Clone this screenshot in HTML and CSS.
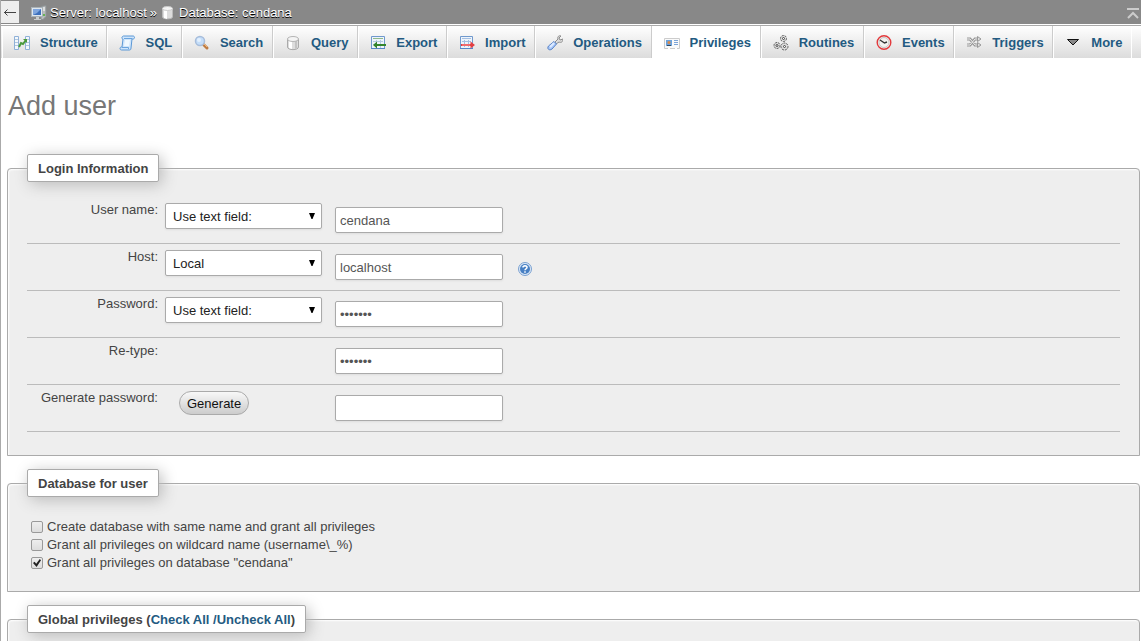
FILE: index.html
```html
<!DOCTYPE html>
<html lang="en">
<head>
<meta charset="utf-8">
<title>Add user</title>
<link rel="stylesheet" href="styles.css">
</head>
<body>
<div class="page">
  <header class="server-bar">
    <button class="nav-toggle" type="button" aria-label="Hide navigation panel">
      <svg width="14" height="10" viewBox="0 0 14 10" fill="none" stroke="#444"><path d="M1 5.500h12M4.500 2.500L1.500 5.500l3 3"/></svg>
    </button>
    <nav class="breadcrumb">
      <svg class="icon" viewBox="0 0 16 16"><path d="M10 1.500l5-1v11l-3 3h-2z" fill="#b9bcbd" stroke="#8c9294"/><path d="M11 3h3M11 5h3" stroke="#fff"/><rect x=".5" y="2.500" width="11" height="9" fill="#dfe7ee" stroke="#a9b2b8"/><rect x="2" y="4" width="8" height="6" fill="#3d70bd"/><path d="M2 4h8l-4 4-4 2z" fill="#7fa6de"/><path d="M5 12h3v2h2v1H3v-1h2z" fill="#c8cbcc"/><circle cx="13" cy="10" r="1" fill="#4caf35"/></svg>
      <a href="#server">Server: localhost</a>
      <span>»</span>
      <svg class="icon" viewBox="0 0 16 16"><path d="M2.500 4v8c0 2.500 10 2.500 10 0V4z" fill="#ddd" stroke="#bbb"/><path d="M4 5h3v9l-3-1z" fill="#fff"/><ellipse cx="7.500" cy="3.500" rx="5" ry="2" fill="#f5f5f5" stroke="#ccc"/></svg>
      <a href="#database">Database: cendana</a>
    </nav>
    <button class="collapse" type="button" aria-label="Scroll to top">
      <svg width="12" height="11" viewBox="0 0 12 11" fill="none" stroke="#ccc" stroke-width="2"><path d="M0 1h12M1 10l5-5 5 5"/></svg>
    </button>
  </header>

  <nav class="tabs">
    <a class="tab" href="#structure"><svg class="icon" viewBox="0 0 16 16"><path d="M.5 1.500h4v13h-4zM11.500 1.500h4v13h-4z" fill="#f4f8fc" stroke="#8fb1d8"/><path d="M1 4.500h3M1 7.500h3M1 10.500h3M12 4.500h3M12 7.500h3M12 10.500h3" stroke="#b0c7df"/><path d="M5 12l2-4 2 1 3-4" fill="none" stroke="#4a9a3c" stroke-width="2"/><path d="M9 4h4v4z" fill="#4a9a3c"/></svg>Structure</a>
    <a class="tab" href="#sql"><svg class="icon" viewBox="0 0 16 16"><path d="M4.500 1h9.500c2 0 2 3 0 3h-1l-1 9c0 2-1 2-2 2H2.500c-2 0-2-3 0-3H3l1-8c-2 0-1-3 .5-3z" fill="#cfe5fb" stroke="#5b98d6"/><path d="M5 3.500h8M3 12.500h6.500V14" fill="none" stroke="#6ba4dd"/><path d="M6 5h5l-1 6H5z" fill="#eff8ff"/></svg>SQL</a>
    <a class="tab" href="#search"><svg class="icon" viewBox="0 0 16 16"><path d="M9.500 9.500l3.500 3.500" stroke="#bd7b43" stroke-width="3" stroke-linecap="round"/><path d="M10 9l3 3" stroke="#f0b77a"/><circle cx="6" cy="6" r="4.500" fill="#c4defa" stroke="#a7bddb" stroke-width="1.500"/><circle cx="5" cy="5" r="2" fill="#e3f0fd"/></svg>Search</a>
    <a class="tab" href="#query"><svg class="icon" viewBox="0 0 16 16"><path d="M2.500 4v8c0 3.500 11 3.500 11 0V4z" fill="#ddd" stroke="#aaa"/><path d="M4 5h3v9l-3-1z" fill="#fff"/><path d="M10 5h2v8l-2 1z" fill="#c3c3c3"/><ellipse cx="8" cy="4" rx="5.500" ry="2.500" fill="#f4f4f4" stroke="#b5b5b5"/></svg>Query</a>
    <a class="tab" href="#export"><svg class="icon" viewBox="0 0 16 16"><path d="M1.500 1.500h13v12h-13z" fill="#eef4fb" stroke="#7099cd"/><path d="M3 3.500h10" stroke="#8fb98b"/><path d="M3 6.500h10M3 9.500h10M6.500 5v8M10.500 5v8" stroke="#b5cae4"/><path d="M1 13.500h14" stroke="#5585c6"/><path d="M3 10l4-3.500V9h9v2H7v2.500z" fill="#35852d"/></svg>Export</a>
    <a class="tab" href="#import"><svg class="icon" viewBox="0 0 16 16"><path d="M1.500 1.500h12v12h-12z" fill="#eef4fb" stroke="#7099cd"/><path d="M3 3.500h9M3 6.500h9M5.500 5v7M9.500 5v7" stroke="#a4bfe2"/><path d="M1 13.500h13" stroke="#5585c6"/><path d="M2 9h9.500V6.500L16 10l-4.500 3.500V11H2z" fill="#e43d40"/><path d="M3 10h8" stroke="#ff9c9c"/></svg>Import</a>
    <a class="tab" href="#operations"><svg class="icon" viewBox="0 0 16 16"><path d="M8 7l3-3c-1-2 1-4 3-3l-2 2 1 2 3-1c0 3-2 4-4 3L9 9z" fill="#ddd" stroke="#8d8d8d"/><path d="M7 6.500L1.500 11c-2 3 1 5 3.500 3l4.500-5z" fill="#a9c8fa" stroke="#5681c5"/><path d="M3 12l4-4" stroke="#dceaff" stroke-width="2"/></svg>Operations</a>
    <a class="tab tab-active" href="#privileges"><svg class="icon" viewBox="0 0 16 16"><path d="M.5 3.500h15v10H.5z" fill="#fafafa" stroke="#ccc"/><path d="M2 5h6v6H2z" fill="#6ca3dd"/><path d="M3 10h4v1H3z" fill="#33475c"/><circle cx="5" cy="7.500" r="1.500" fill="#d98b4d"/><path d="M10 5.500h4M10 7.500h4M10 9.500h4" stroke="#7da5d8"/><path d="M4 13.500h2M11 13.500h2" stroke="#fff"/></svg>Privileges</a>
    <a class="tab" href="#routines"><svg class="icon" viewBox="0 0 16 16"><g fill="#ddd" stroke="#555" stroke-dasharray="2 1"><circle cx="10.500" cy="3.500" r="3"/><circle cx="4" cy="10.500" r="3"/><circle cx="11.500" cy="11.500" r="3.500"/></g><g fill="#fff" stroke="#444"><circle cx="10.500" cy="3.500" r="1"/><circle cx="4" cy="10.500" r="1"/><circle cx="11.500" cy="11.500" r="1"/></g></svg>Routines</a>
    <a class="tab" href="#events"><svg class="icon" viewBox="0 0 16 16"><circle cx="8" cy="7.500" r="6.800" fill="#f2f2f0" stroke="#e2393c" stroke-width="1.400"/><circle cx="8" cy="7.500" r="5" fill="none" stroke="#c4c4c4"/><path d="M4 5l4.500 3 2.500-1" fill="none" stroke="#333" stroke-width="1.400"/></svg>Events</a>
    <a class="tab" href="#triggers"><svg class="icon" viewBox="0 0 16 16"><g fill="none"><path d="M1 4h3l5 6h4M1 10h3l5-6h4" stroke="#999" stroke-width="3"/><path d="M1 4h3l5 6h4M1 10h3l5-6h4" stroke="#eee"/></g><path d="M11.500 1.500L15 4l-3.500 2.500zM11.500 7.500L15 10l-3.500 2.500z" fill="#ddd" stroke="#999"/></svg>Triggers</a>
    <a class="tab tab-more" href="#more"><svg class="icon" viewBox="0 0 16 16"><path d="M2.500 4.500h11L8 10z" fill="#888" stroke="#111"/></svg>More</a>
  </nav>

  <main class="content">
    <h1 class="title">Add user</h1>
    <form>
      <fieldset class="panel">
        <legend class="panel-title">Login Information</legend>
        <div class="rows">
          <div class="row">
            <label class="row-label" for="user-mode">User name:</label>
            <span class="picker"><select id="user-mode"><option>Use text field:</option><option>Any user</option></select><svg width="6" height="6" viewBox="0 0 6 6"><path d="M0 0h6L3.500 6h-1z"/></svg></span>
            <input class="field" type="text" value="cendana" aria-label="User name">
          </div>
          <div class="row">
            <label class="row-label" for="host-mode">Host:</label>
            <span class="picker"><select id="host-mode"><option>Local</option><option>Any host</option></select><svg width="6" height="6" viewBox="0 0 6 6"><path d="M0 0h6L3.500 6h-1z"/></svg></span>
            <input class="field" type="text" value="localhost" aria-label="Host">
            <svg class="help" viewBox="0 0 14 14" role="img" aria-label="Help"><circle cx="7" cy="7" r="6.500" fill="#dbe8f7" stroke="#7aa0d0"/><circle cx="7" cy="7" r="5" fill="#477fc3"/><path d="M3 5a5 4 0 0 1 8 0z" fill="#7ba6da"/><path d="M5 5.500c0-2.500 4-2.500 4 0C9 7 7 6.700 7 8.200M7 9.300v1.500" fill="none" stroke="#fff" stroke-width="1.500"/></svg>
          </div>
          <div class="row">
            <label class="row-label" for="password-mode">Password:</label>
            <span class="picker"><select id="password-mode"><option>Use text field:</option><option>No Password</option></select><svg width="6" height="6" viewBox="0 0 6 6"><path d="M0 0h6L3.500 6h-1z"/></svg></span>
            <input class="field" type="password" value="cendana" aria-label="Password">
          </div>
          <div class="row">
            <label class="row-label" for="retype">Re-type:</label>
            <input class="field" id="retype" type="password" value="cendana">
          </div>
          <div class="row">
            <label class="row-label" for="generated">Generate password:</label>
            <button class="generate" type="button">Generate</button>
            <input class="field" id="generated" type="text">
          </div>
        </div>
      </fieldset>

      <fieldset class="panel">
        <legend class="panel-title">Database for user</legend>
        <div class="checks">
          <label class="check"><input type="checkbox">Create database with same name and grant all privileges</label>
          <label class="check"><input type="checkbox">Grant all privileges on wildcard name (username\_%)</label>
          <label class="check"><input type="checkbox" checked>Grant all privileges on database "cendana"</label>
        </div>
      </fieldset>

      <fieldset class="panel">
        <legend class="panel-title">Global privileges (<a href="#check">Check All /</a><a href="#uncheck">Uncheck All</a>)</legend>
      </fieldset>
    </form>
  </main>
</div>
</body>
</html>
```
FILE: styles.css
```css
* { box-sizing: border-box; }

body {
  margin: 0;
  background: #fff;
  color: #444;
  font: 13px/18px "Liberation Sans", Arial, sans-serif;
}

.page {
  height: 100vh;
  overflow: hidden;
  border-left: 1px solid #aaa;
}

a { color: #235a81; text-decoration: none; }

.icon { width: 16px; height: 16px; flex: none; }

.server-bar {
  display: flex;
  align-items: center;
  height: 24px;
  background: #888;
}

.nav-toggle,
.collapse {
  display: flex;
  align-items: center;
  border: 0;
  padding: 0;
}

.nav-toggle {
  justify-content: center;
  width: 18px;
  height: 22px;
  background: #eee;
}

.breadcrumb {
  display: flex;
  align-items: center;
  gap: 3px;
  padding: 1px 0 0 12px;
  color: #fff;
  text-shadow: 0 1px 0 #000;
}

.breadcrumb a { color: #fff; }

.collapse {
  margin-left: auto;
  padding: 2px 2px 0 0;
  background: none;
}

.tabs {
  display: flex;
  height: 33px;
  margin-top: 1px;
  padding: 0 9px 0 1px;
  border-top: 1px solid #aaa;
  background: linear-gradient(#fff, #dcdcdc);
}

.tab {
  display: flex;
  flex: 1 1 auto;
  align-items: center;
  gap: 10px;
  padding: 1px 8px 0 11px;
  border-left: 1px solid #fff;
  border-right: 1px solid #ccc;
  font-weight: bold;
}

.tab-active { background: #fff; }
.tab-more { border-right-color: #fff; }

.content { padding: 0 1px 0 6px; }

.title {
  margin: 33px 0;
  padding-left: 1px;
  color: #777;
  font-size: 27px;
  font-weight: normal;
  line-height: 30px;
}

.panel {
  margin: 0 0 13px;
  padding: 15px 19px 19px;
  border: 1px solid #aaa;
  border-radius: 4px 4px 0 0;
  background: #eee;
  box-shadow: inset 1px 1px 2px #fff;
}

.panel-title {
  padding: 5px 10px 3px;
  border: 1px solid #aaa;
  border-radius: 2px;
  background: #fff;
  box-shadow: 3px 3px 15px #bbb;
  font-weight: bold;
}

.rows { padding-bottom: 4px; }

.row {
  display: grid;
  grid-template-columns: 131px 177px 168px auto;
  align-items: start;
  height: 47px;
  border-bottom: 1px solid #bbb;
}

.row-label {
  padding-top: 4px;
  text-align: right;
}

.picker {
  display: grid;
  width: 157px;
  margin: 6px 0 0 7px;
}

.picker select,
.picker svg { grid-area: 1 / 1; }

.picker svg {
  place-self: center end;
  margin-right: 7px;
  pointer-events: none;
}

select,
.field {
  width: 100%;
  height: 26px;
  border: 1px solid #aaa;
  border-radius: 2px;
  background: #fff;
  box-shadow: 0 1px 2px #ddd;
  font: inherit;
}

select {
  appearance: none;
  padding: 2px 7px 0;
  color: #222;
}

.field {
  grid-column: 3;
  margin-top: 10px;
  padding: 0 4px;
  color: #555;
}

.help {
  width: 14px;
  height: 14px;
  margin: 18px 0 0 15px;
}

.generate {
  justify-self: start;
  height: 24px;
  margin: 6px 0 0 21px;
  padding: 2px 7px 0;
  border: 1px solid #aaa;
  border-radius: 12px;
  background: linear-gradient(#f8f8f8, #ccc);
  color: #111;
  font: inherit;
}

.checks { padding: 6px 0 0 4px; }

.check {
  display: flex;
  align-items: center;
  gap: 4px;
}

.check input {
  display: grid;
  place-items: center;
  appearance: none;
  width: 12px;
  height: 12px;
  margin: 0;
  border: 1px solid #999;
  border-radius: 2px;
  background: linear-gradient(#eee, #ddd);
}

.check input:checked::after {
  content: "";
  width: 8px;
  height: 8px;
  background: #222;
  clip-path: polygon(0 50%, 20% 35%, 40% 60%, 85% 0, 100% 15%, 45% 100%);
}
```
